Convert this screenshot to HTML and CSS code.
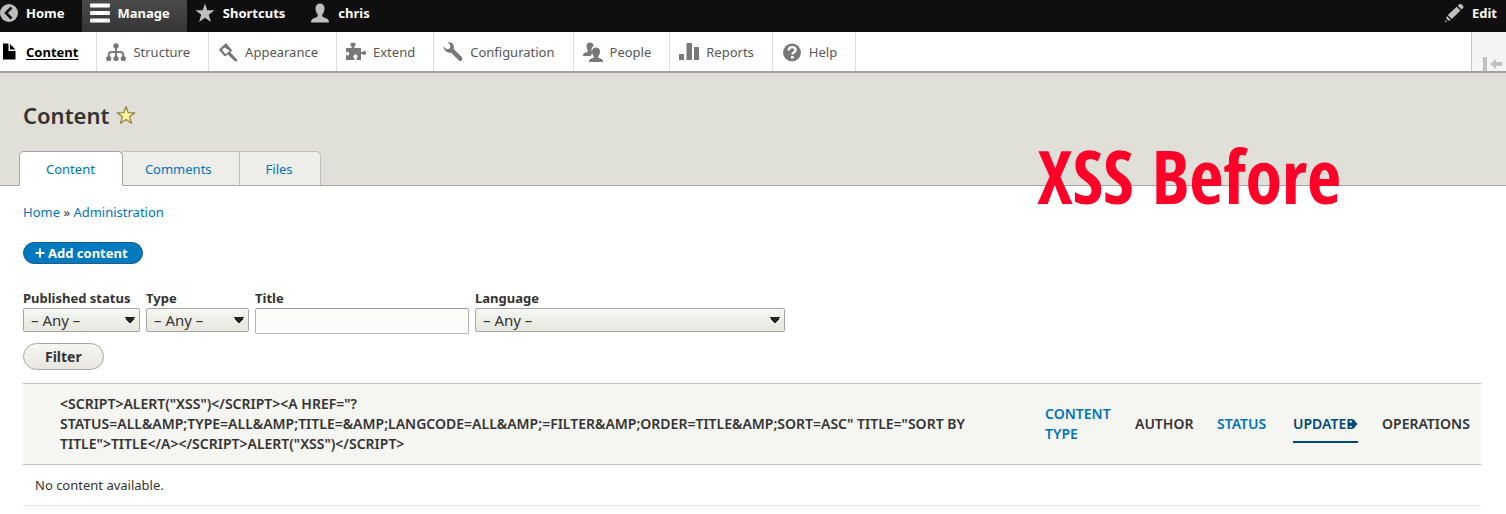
FILE: index.html
```html
<!DOCTYPE html>
<html lang="en">
<head>
<meta charset="utf-8">
<title>Content</title>
<meta name="viewport" content="width=device-width, initial-scale=1">
<link rel="stylesheet" href="styles.css">
</head>
<body>
<nav class="toolbar" aria-label="Toolbar">
  <a class="toolbar-item toolbar-item-first" href="#"><svg class="icon" viewBox="0 0 20 20"><circle cx="9" cy="10" r="9" fill="#bebebe"/><path d="M11.500 4.500 6 10l5.500 5.500" fill="none" stroke="#0f0f0f" stroke-width="2.600"/></svg>Home</a>
  <a class="toolbar-item toolbar-item-active" href="#"><svg class="icon" viewBox="0 0 20 20"><path d="M1 .5h18q1 0 1 1v2q0 1-1 1H1q-1 0-1-1v-2q0-1 1-1zM1 8h18q1 0 1 1v2q0 1-1 1H1q-1 0-1-1V9q0-1 1-1zM1 15.500h18q1 0 1 1v2q0 1-1 1H1q-1 0-1-1v-2q0-1 1-1z" fill="#fff"/></svg>Manage</a>
  <a class="toolbar-item" href="#"><svg class="icon" viewBox="0 0 20 20"><path d="M10 .5l2.300 6.800h7.200l-5.700 4.400 2.100 7.300L10 14.800 4.100 19l2.100-7.300L.5 7.300h7.200z" fill="#bebebe"/></svg>Shortcuts</a>
  <a class="toolbar-item" href="#"><svg class="icon" viewBox="0 0 20 20"><path d="M10 .5c3 0 4.500 2 4.500 5 0 2.500-1 4.500-2 5.700-.8 1-.3 2.500 1 3l3 1.200c1.800.8 2.500 1.800 2.500 4.100H1c0-2.300.7-3.300 2.500-4.100l3-1.200c1.300-.5 1.800-2 1-3-1-1.200-2-3.200-2-5.700 0-3 1.500-5 4.500-5z" fill="#bebebe"/></svg>chris</a>
  <a class="toolbar-item toolbar-item-edit" href="#"><svg class="icon" viewBox="0 0 20 20"><path d="M13.700 2.800l1.700-1.600q1-.8 2 0l1.700 1.700q.8 1 0 2L17.500 6.600zM12.700 3.800l3.800 3.800-8.700 8.400-4-3.900zM2.900 13.100l3.900 3.800-2.300.8-2.400-2.300zM1.400 16.900l1.700 1.600L1 19.300z" fill="#bebebe"/></svg>Edit</a>
</nav>
<nav class="tray" aria-label="Administration menu">
  <a class="tray-item tray-item-first" href="#"><svg class="icon" viewBox="0 0 20 20"><path d="M3 1.500h5.500V9H15.500v8.500H3zM10 2l5.500 5.500H10z" fill="#000"/></svg><span class="tray-current">Content</span></a>
  <a class="tray-item" href="#"><svg class="icon" viewBox="0 0 20 20"><g fill="#787878"><circle cx="10" cy="4" r="2.700"/><circle cx="2.700" cy="16.500" r="2.600"/><circle cx="10" cy="16.500" r="2.600"/><circle cx="17.300" cy="16.500" r="2.600"/></g><path d="M10 5v11M2.700 16v-3q0-3 3-3h8.600q3 0 3 3v3" fill="none" stroke="#787878" stroke-width="1.900"/></svg>Structure</a>
  <a class="tray-item" href="#"><svg class="icon" viewBox="0 0 20 20"><path d="M8 1 .8 7.700l5.700 6.600 1.300-.3 1.900-1.500 7.300 6.700q1.200.8 2-.2.700-1-.2-1.800l-6.500-6.900 2-1.900zM6.500 5.400l5.200 3.400-4.100 3.500-3.400-4.600z" fill="#787878" fill-rule="evenodd"/></svg>Appearance</a>
  <a class="tray-item" href="#"><svg class="icon" viewBox="0 0 20 20"><path d="M0 6h5.600V4.200C3.700 3.200 4 .9 6 .8h2c2 .1 2.300 2.400.4 3.400V6H15v4h1.500c.8-1.600 3.500-1.500 3.500 1s-2.700 2.600-3.500 1H15v6h-4.500v-1.800c2-1.200 1-3.700-1-3.700s-3 2.500-1 3.700V18H0v-5.500c1.500 1.700 3.200.8 3.200-.8S1.500 9 0 10.500z" fill="#787878"/></svg>Extend</a>
  <a class="tray-item" href="#"><svg class="icon" viewBox="0 0 20 20"><path d="M5 .4c3-.6 5.800 1 6 4.600l-.3 2 8 8c1.600 1.700.2 4.400-2.200 4L8 10.600C5 11.500 1 9 .5 4.500L4 7.400l3-1.100.3-3z" fill="#787878"/></svg>Configuration</a>
  <a class="tray-item" href="#"><svg class="icon" viewBox="0 0 20 20"><g fill="#787878"><path d="M7 .5c2.200 0 3.600 1.300 3.600 3.500C8.300 5.200 8 8 9.200 11l-1.400 3H0c0-2 .5-2.600 2-3.200l2.200-.8c1-.4 1-1.300.4-2C3.800 7 3.500 5.500 3.500 4c0-2.200 1.300-3.500 3.500-3.500z"/><path d="M13 5.500c2.400 0 4 1.400 4 4 0 2-.7 3.300-1.500 4.400-.6.800-.5 1.500.5 2l2 .8c1.500.6 2 1.300 2 3.300H6c0-2 .5-2.700 2-3.300l2-.8c1-.5 1.100-1.200.5-2C9.700 12.800 9 11.500 9 9.500c0-2.600 1.600-4 4-4z"/></g></svg>People</a>
  <a class="tray-item" href="#"><svg class="icon" viewBox="0 0 20 20"><path d="M0 12h5v6H0zM7.500 1H13v17H7.500zM15 5h5v13h-5z" fill="#787878"/></svg>Reports</a>
  <a class="tray-item" href="#"><svg class="icon" viewBox="0 0 20 20"><circle cx="10" cy="10.500" r="9" fill="#787878"/><path d="M6.700 8.500c0-4.500 6.900-4.300 6.900-.6 0 2.300-3.200 2.300-3.200 4.600" fill="none" stroke="#fff" stroke-width="2.400"/><path d="M9 14h2.700v2.500H9z" fill="#fff"/></svg>Help</a>
  <button class="tray-toggle" type="button" aria-label="Vertical orientation"><svg class="toggle-icon" viewBox="0 0 34 39"><path d="M11 25h4v14h-4z" fill="#c0c0c0"/><path d="M18 32l6-5v3h6v4h-6v3z" fill="#c0c0c0"/></svg></button>
</nav>
<header class="page-header">
  <div class="title-row">
    <h1 class="page-title">Content</h1>
    <a class="title-star" href="#" aria-label="Add to shortcuts"><svg class="icon" viewBox="0 0 20 20"><path d="M10 1.500l2.200 6.100 6.600.2-5.200 4 1.900 6.400-5.500-3.700-5.500 3.700 1.900-6.400-5.200-4 6.600-.2z" fill="#fdf5a0" stroke="#8c7d3c" stroke-width="1.200" stroke-linejoin="round"/></svg></a>
  </div>
  <nav class="tabs" aria-label="Tabs">
    <a class="tab tab-active" href="#">Content</a>
    <a class="tab" href="#">Comments</a>
    <a class="tab tab-last" href="#">Files</a>
  </nav>
  <div class="caption">XSS Before</div>
</header>
<main class="page">
  <nav class="breadcrumb" aria-label="Breadcrumb"><a href="#">Home</a> » <a href="#">Administration</a></nav>
  <a class="add-button" href="#"><svg class="plus" viewBox="0 0 10 10"><path d="M5 .5v9M.5 5h9" stroke="#fff" stroke-width="2"/></svg>Add content</a>
  <form class="filters">
    <div class="field field-status"><label for="status">Published status</label><select id="status"><option>– Any –</option></select></div>
    <div class="field field-type"><label for="type">Type</label><select id="type"><option>– Any –</option></select></div>
    <div class="field field-title"><label for="title">Title</label><input id="title" type="text"></div>
    <div class="field field-language"><label for="language">Language</label><select id="language"><option>– Any –</option></select></div>
    <div class="actions"><button class="filter-button" type="button">Filter</button></div>
  </form>
  <table class="listing">
    <colgroup><col class="col-check"><col><col class="col-type"><col class="col-author"><col class="col-status"><col class="col-updated"><col class="col-operations"></colgroup>
    <thead>
      <tr>
        <th></th>
        <th>&lt;script&gt;alert("XSS")&lt;/script&gt;&lt;a href="?<wbr>status=All&amp;amp;type=All&amp;amp;title=&amp;amp;langcode=All&amp;amp;=Filter&amp;amp;order=title&amp;amp;sort=asc" title="sort by title"&gt;Title&lt;/a&gt;&lt;/script&gt;alert("XSS")&lt;/script&gt;</th>
        <th><a href="#">Content type</a></th>
        <th>Author</th>
        <th><a href="#">Status</a></th>
        <th><a class="sorted" href="#">Updated<svg class="sort-arrow" viewBox="0 0 10 10"><path d="M0 3.500h4V1l6 4-6 4V7H0z" fill="#004875"/></svg></a></th>
        <th>Operations</th>
      </tr>
    </thead>
    <tbody><tr><td colspan="7">No content available.</td></tr></tbody>
  </table>
</main>
</body>
</html>
```
FILE: styles.css
```css
* { box-sizing: border-box; }
body {
  margin: 0;
  background: #fff;
  color: #333;
  font: 13px/20px "Noto Sans", "Open Sans", sans-serif;
}
a { color: #0074bd; text-decoration: none; }
.icon { width: 20px; height: 20px; flex: none; display: block; }

.toolbar { display: flex; height: 32px; background: #0f0f0f; }
.toolbar-item {
  display: flex;
  align-items: center;
  gap: 8px;
  padding: 0 17px 6px 8px;
  color: #fff;
  font-weight: 700;
}
.toolbar-item-first { padding-left: 0; gap: 6px; }
.toolbar-item-active { background: linear-gradient(#4a4a4a, #353535); }
.toolbar-item-edit { margin-left: auto; padding-right: 9px; }

.tray { display: flex; height: 41px; background: #fff; border-bottom: 2px solid #a2a39d; }
.tray-item {
  display: flex;
  align-items: center;
  gap: 7px;
  padding: 0 18px 0 9px;
  border-right: 1px solid #ddd;
  color: #565656;
}
.tray-item-first { gap: 6px; padding-left: 0; }
.tray-current { color: #000; font-weight: 700; text-decoration: underline; text-underline-offset: 2px; }
.tray-toggle {
  width: 35px;
  margin-left: auto;
  padding: 0;
  border: 0;
  border-left: 1px solid #c4c4c4;
  background: #f4f4f4;
}
.toggle-icon { display: block; width: 34px; height: 39px; }

.page-header {
  position: relative;
  padding: 28px 19px 0;
  background: #e0e0d8;
  border-bottom: 1px solid #a6a6a6;
}
.title-row { display: flex; align-items: center; gap: 7px; padding-left: 4px; }
.page-title { margin: 0; font-size: 22px; line-height: 28px; font-weight: 600; }
.tabs { display: flex; margin-top: 22px; margin-bottom: -1px; }
.tab {
  height: 35px;
  padding: 0 27px 0 22px;
  border: 1px solid #bfbfbb;
  border-left: 0;
  border-bottom-color: #a6a6a6;
  background: #ededea;
  line-height: 34px;
}
.tab-last { padding-left: 26px; border-top-right-radius: 5px; }
.tab-active {
  padding-left: 26px;
  border: 1px solid #a6a6a6;
  border-bottom-color: #fff;
  border-radius: 5px 5px 0 0;
  background: #fff;
}
.caption {
  position: absolute;
  right: 165px;
  top: 63px;
  color: #ff0028;
  font: 800 74px/80px "Open Sans Condensed", "Liberation Sans Narrow", sans-serif;
  white-space: nowrap;
}

.page { padding: 16px 25px 8px 23px; }
.breadcrumb { margin-bottom: 20px; }
.add-button {
  display: inline-flex;
  align-items: center;
  gap: 3px;
  height: 22px;
  padding: 0 14px 0 11px;
  border: 1px solid #1e5c90;
  border-radius: 11px;
  background: #0079bf;
  color: #fff;
  font-weight: 700;
  vertical-align: top;
}
.plus { width: 10px; height: 10px; }

.filters { display: flex; flex-wrap: wrap; gap: 0 6px; margin-top: 24px; }
.field label { display: block; font-weight: 700; white-space: nowrap; }
.field select, .field input { display: block; width: 100%; border: 1px solid #a6a6a6; font: 15px/20px "Noto Sans", sans-serif; color: #333; }
.field select {
  height: 24px;
  padding: 0 24px 1px 7px;
  border-radius: 2px;
  appearance: none;
  background:
    conic-gradient(from -38deg at 50% 100%, #222 76deg, transparent 0) right 4px center / 10px 7px no-repeat,
    linear-gradient(#f6f6f3, #e7e7df);
}
.field input { height: 26px; border-color: #999 #b3b3b3 #b3b3b3; border-radius: 2px; background: #fcfcfa; }
.field-status { width: 117px; }
.field-type { width: 103px; }
.field-title { width: 214px; }
.field-language { width: 310px; }
.actions { flex-basis: 100%; margin-top: 9px; }
.filter-button {
  display: block;
  height: 27px;
  padding: 0 21px;
  border: 1px solid #a6a6a6;
  border-radius: 14px;
  background: linear-gradient(#f6f6f3, #e7e7df);
  color: #333;
  font: 700 14px/20px "Noto Sans", sans-serif;
}

.listing { width: 100%; margin-top: 13px; border-collapse: collapse; table-layout: fixed; }
.listing th {
  height: 81px;
  padding: 10px 12px;
  border: solid #bfbfba;
  border-width: 1px 0;
  background: #f5f5f2;
  font-size: 14px;
  font-weight: 600;
  text-align: left;
  text-transform: uppercase;
}
.listing td { padding: 10px 12px; border-bottom: 1px solid #e6e4df; }
.col-check { width: 25px; }
.col-type { width: 90px; }
.col-author { width: 82px; }
.col-status { width: 76px; }
.col-updated { width: 89px; }
.col-operations { width: 111px; }
.sorted { position: relative; display: block; padding: 9px 0 7px; border-bottom: 2px solid #004875; color: #004875; }
.sort-arrow { position: absolute; right: 0; top: 14px; width: 10px; height: 10px; }
```
